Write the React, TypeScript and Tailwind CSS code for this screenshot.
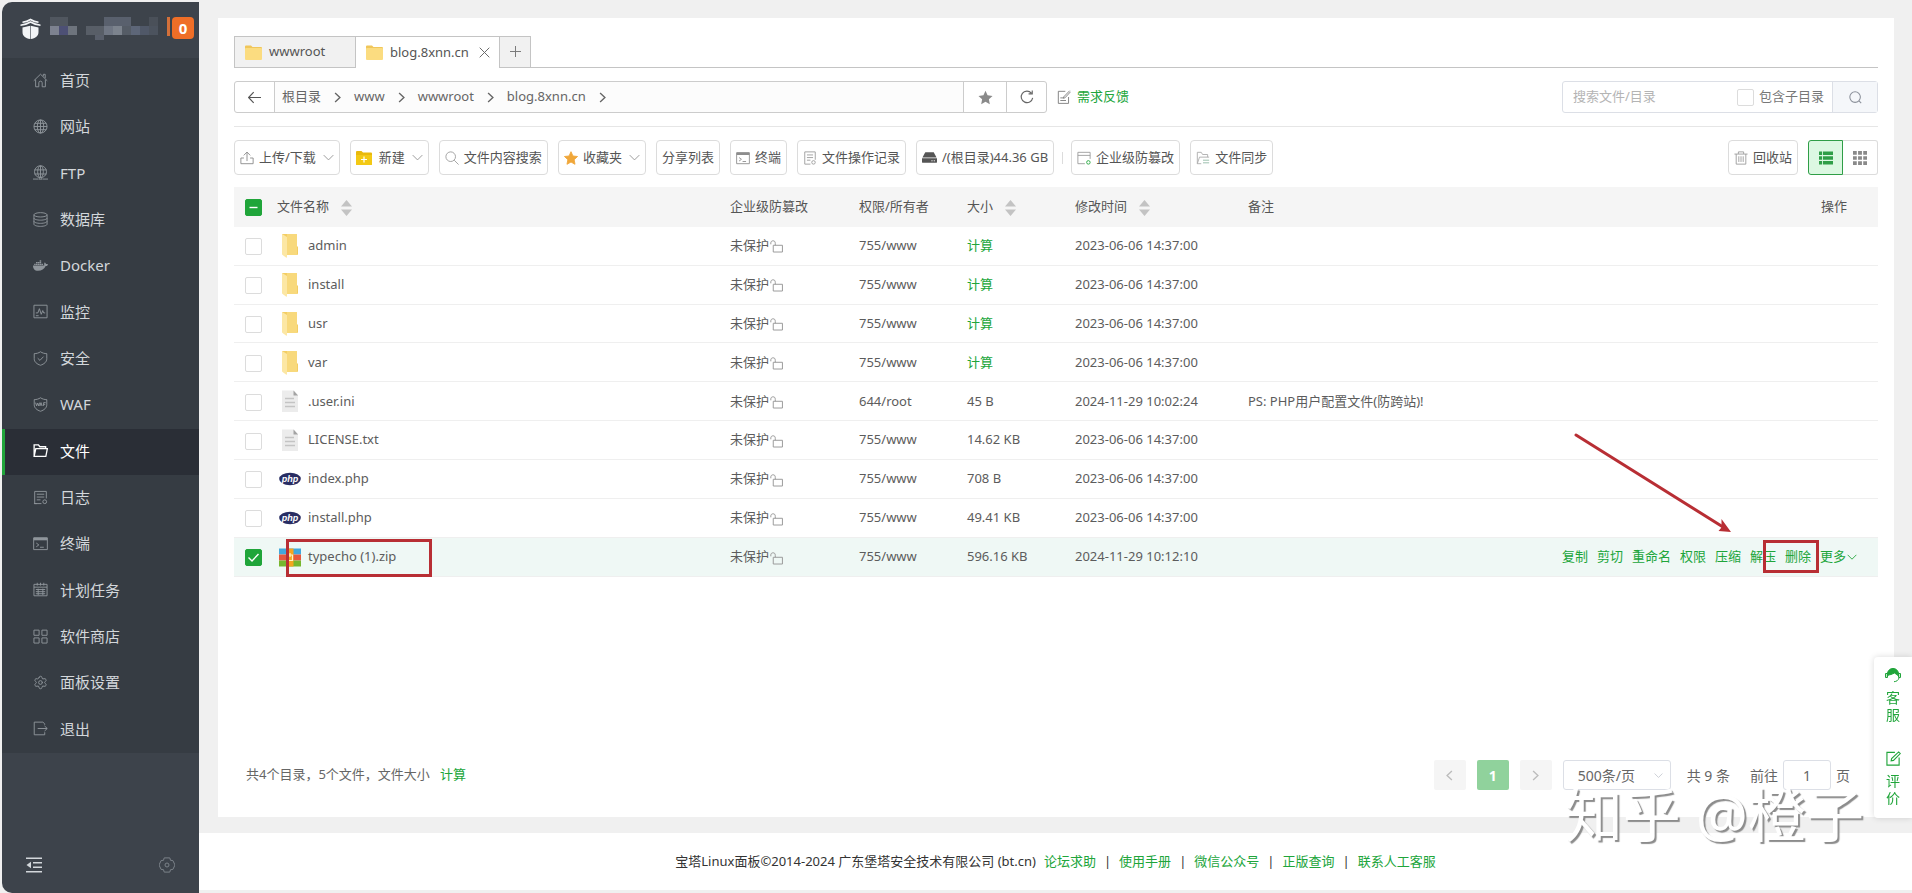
import React from 'react';
import { Settings } from 'lucide-react';
import { FaDocker } from 'react-icons/fa';

type IconProps = { className?: string; children: React.ReactNode };

const Icon = ({ className = 'size-[15px]', children }: IconProps) => (
    <svg
        className={`shrink-0 ${className}`}
        viewBox="0 0 16 16"
        fill="none"
        stroke="currentColor"
        strokeWidth="1"
        aria-hidden="true"
    >
        {children}
    </svg>
);

const ChevronDown = ({ className = 'size-[11px] text-[#999999]' }: { className?: string }) => (
    <Icon className={className}>
        <path d="M1 4.5 8 11.5l7-7" strokeWidth="1.4" />
    </Icon>
);

const ChevronRight = ({ className = 'size-[11px]' }: { className?: string }) => (
    <Icon className={className}>
        <path d="m4.5 1.5 7 6.5-7 6.5" strokeWidth="2" />
    </Icon>
);

const TerminalIcon = ({ className }: { className?: string }) => (
    <Icon className={className}>
        <path d="M.7 2h14.6v12.5H.7z" />
        <path d="M.7 1.6h14.6v3H.7z" fill="currentColor" stroke="none" />
        <path d="m3.5 7.5 2.7 2-2.7 2M7.5 12h4" />
    </Icon>
);

const menu = [
    {
        label: '首页',
        icon: (
            <Icon>
                <path d="M.8 8.3 8 1.3l7.2 7M2.8 7v7.7h3.4v-4.2a1.8 1.8 0 0 1 3.6 0v4.2h3.4V7M11 3.5V1.4h2v4" />
            </Icon>
        ),
    },
    {
        label: '网站',
        icon: (
            <Icon>
                <circle cx="8" cy="8" r="7" />
                <ellipse cx="8" cy="8" rx="3.4" ry="7" />
                <path d="M8 1v14M1 8h14M1.9 4.6h12.2M1.9 11.4h12.2" />
            </Icon>
        ),
    },
    {
        label: 'FTP',
        icon: (
            <Icon>
                <circle cx="8" cy="7.2" r="6.4" />
                <ellipse cx="8" cy="7.2" rx="3" ry="6.4" />
                <path d="M8 1v12.5M1.6 5.2h12.8M1.6 9.6h12.8M0 15h6m4 0h6" />
                <circle cx="8" cy="14.6" r="1.2" />
            </Icon>
        ),
    },
    {
        label: '数据库',
        icon: (
            <Icon>
                <ellipse cx="8" cy="3" rx="7" ry="2.3" />
                <path d="M1 3v10c0 1.3 3 2.3 7 2.3s7-1 7-2.3V3M1 6.4c0 1.3 3 2.3 7 2.3s7-1 7-2.3M1 9.8c0 1.3 3 2.3 7 2.3s7-1 7-2.3" />
            </Icon>
        ),
    },
    { label: 'Docker', icon: <FaDocker className="size-[15px]" /> },
    {
        label: '监控',
        icon: (
            <Icon>
                <path d="M1 1.3h14v13.4H1zM3 9.5h2.2L6.8 5l2 6 1.6-4 1 2.5H13M3 12.5h3" />
            </Icon>
        ),
    },
    {
        label: '安全',
        icon: (
            <Icon>
                <path d="M8 .8c2 1.4 4.3 2 6.7 2v5.4c0 3.4-2.7 5.7-6.7 7-4-1.3-6.7-3.6-6.7-7V2.8c2.4 0 4.7-.6 6.7-2z" />
                <path d="m5 7.7 2.4 2.3L11.2 6" />
            </Icon>
        ),
    },
    {
        label: 'WAF',
        icon: (
            <Icon>
                <path d="M8 .8c2 1.4 4.3 2 6.7 2v5.4c0 3.4-2.7 5.7-6.7 7-4-1.3-6.7-3.6-6.7-7V2.8c2.4 0 4.7-.6 6.7-2z" />
                <path d="m2.8 6 1 3.5L5 6.5l1.1 3L7 6m.2 3.5L8.5 6l1.3 3.5M7.8 8.5h1.5m2-2.5v3.5m0-3.5h2.2m-2.2 1.8h1.7" />
            </Icon>
        ),
    },
    {
        label: '文件',
        active: true,
        icon: (
            <Icon>
                <path d="M1.2 14.2V2h4.6l1.5 2h6.2v2M1.2 14.2 3 6h12.3l-1.6 8.2z" strokeWidth="1.4" />
            </Icon>
        ),
    },
    {
        label: '日志',
        icon: (
            <Icon>
                <path d="M9 14.5H1.8v-13h12.4V9M4 4.5h8M4 7.5h8M4 10.5h4M1 14.5h3" />
                <circle cx="12.5" cy="12.5" r="2" />
            </Icon>
        ),
    },
    { label: '终端', icon: <TerminalIcon /> },
    {
        label: '计划任务',
        icon: (
            <Icon>
                <path d="M1 2.5h14v12.2H1zM1 5.5h14M4.5.8v3M8 .8v3M11.5.8v3M3 8h10M3 10.3h10M3 12.5h10M5.5 7v7M10.5 7v7" />
            </Icon>
        ),
    },
    {
        label: '软件商店',
        icon: (
            <Icon>
                <path d="M1 1.2h5.5v5.5H1zM9.5 1.2H15v5.5H9.5zM1 9.5h5.5V15H1zM9.5 9.5H15V15H9.5z" />
            </Icon>
        ),
    },
    { label: '面板设置', icon: <Settings className="size-[15px]" strokeWidth={1.5} /> },
    {
        label: '退出',
        icon: (
            <Icon>
                <path d="M12.5 4V3l-2-1.8H1.3v13.5h11.2V12M5 8h10M12.3 5.3 15.2 8l-2.9 2.7" />
            </Icon>
        ),
    },
];

const mosaic = [
    [50, 18, 18, '#50565f'], [104, 18, 27, '#59606d'], [149, 18, 9, '#4a5059'],
    [50, 27, 9, '#7d8290'], [59, 27, 9, '#4d5075'], [68, 27, 9, '#6e747d'],
    [86, 27, 18, '#585e67'], [104, 27, 9, '#6f7683'], [113, 27, 9, '#7c838d'],
    [122, 27, 9, '#555c66'], [131, 27, 9, '#5d6678'], [140, 27, 9, '#505868'], [149, 27, 9, '#4c535e'],
    [95, 36, 9, '#595f6b'],
] as const;

const Sidebar = () => (
    <aside className="mt-0.5 ml-0.5 flex w-[197px] shrink-0 flex-col overflow-hidden rounded-l-[10px] bg-[#3d434b] text-[#d3d7db]">
        <header className="flex h-14 items-start pt-[15px] pl-[18px]">
            <svg className="mt-px size-[21px] shrink-0" viewBox="0 0 21 21" fill="#f2f4f6" aria-hidden="true">
                <path d="M2.500 9.500 10.200 7.800V21C5.500 20.300 2.500 18 2.500 14zM18.500 9.500l-7.700-1.700V21c4.700-.7 7.700-3 7.700-7z" />
                <path d="M.5 7.300c4-.3 7-1.500 10-3.300 3 1.800 6 3 10 3.300M2.500 4.300c3-.3 5.500-1.200 8-2.800 2.500 1.600 5 2.500 8 2.800" fill="none" stroke="#f2f4f6" strokeWidth="1.500" />
            </svg>
            <svg className="ml-2 h-[23px] w-[112px] shrink-0" viewBox="49 18 112 23" aria-hidden="true">
                {mosaic.map(([x, y, w, fill]) => (
                    <rect key={`${x}-${y}`} x={x} y={y} width={w} height={y === 36 ? 5 : 9} fill={fill} />
                ))}
            </svg>
            <span className="ml-1.5 h-[19px] w-[3px] shrink-0 bg-[#d3703a]" />
            <span className="ml-0.5 flex h-[22px] w-[22px] shrink-0 items-center justify-center rounded-[4px] bg-[#ef6e27] text-[15px] font-bold text-white">
                0
            </span>
        </header>
        <nav className="flex h-[695px] flex-col bg-[#363c43]">
            {menu.map((item) => (
                <a
                    key={item.label}
                    href="#"
                    className={`flex flex-1 items-center gap-3 border-l-[3px] pb-0.5 pl-7 text-[15px] ${
                        item.active ? 'border-[#20a53a] bg-[#2a2e36] text-white' : 'border-transparent'
                    }`}
                >
                    <span className={item.active ? 'text-white' : 'text-[#8f959b]'}>{item.icon}</span>
                    {item.label}
                </a>
            ))}
        </nav>
        <div className="mt-auto flex items-center justify-between pr-6 pb-5 pl-6">
            <button type="button" aria-label="收起菜单">
                <Icon className="size-4 text-[#d3d7db]">
                    <path d="M0 1.2h16M7 5.7h9M7 10.2h9M0 14.8h16" strokeWidth="1.5" />
                    <path d="M5 4.8v6.4L.5 8z" fill="currentColor" stroke="none" />
                </Icon>
            </button>
            <button type="button" aria-label="菜单设置">
                <Icon className="size-4 text-[#7b8289]">
                    <path d="M5.200.9h5.600l.7 2.400 2.400.3L16 8l-2.100 4.400-2.400.3-.7 2.400H5.200l-.7-2.400-2.400-.3L0 8l2.100-4.400 2.400-.3z" />
                    <circle cx="8" cy="8" r="2" />
                </Icon>
            </button>
        </div>
    </aside>
);

const SmallFolder = () => (
    <svg className="h-[15px] w-[17px] shrink-0" viewBox="0 0 17 15" aria-hidden="true">
        <path d="M0 1.5Q0 .5 1 .5h5L7.5 2H16q1 0 1 1v3H0z" fill="#f0c65a" />
        <rect y="3" width="17" height="12" rx="1" fill="#fbdc80" />
    </svg>
);

const Tabs = () => (
    <div className="flex text-[13px] text-[#555555]">
        <button type="button" className="flex h-8 w-[122px] items-center gap-[7px] border border-[#c4c4c4] bg-[#f1f1f1] pl-2.5">
            <SmallFolder />
            wwwroot
        </button>
        <button type="button" className="flex h-8 w-[143px] items-center gap-[7px] border-t border-[#c4c4c4] pl-2.5">
            <SmallFolder />
            blog.8xnn.cn
            <Icon className="ml-[3px] size-[11px] text-[#666666]">
                <path d="m1 1 14 14M15 1 1 15" strokeWidth="1.4" />
            </Icon>
        </button>
        <button type="button" aria-label="新建标签" className="flex h-8 w-8 items-center justify-center border border-[#c4c4c4] bg-[#f1f1f1] pb-0.5">
            <Icon className="size-[11px] text-[#777777]">
                <path d="M8 0v16M0 8h16" strokeWidth="1.4" />
            </Icon>
        </button>
        <span className="h-8 flex-1 border-b border-[#c4c4c4]" />
    </div>
);

type CheckProps = { label: string; checked?: boolean; mixed?: boolean; id?: string };

const Check = ({ label, checked = false, mixed = false, id }: CheckProps) => (
    <span className="inline-grid size-[17px] shrink-0 align-middle">
        <input
            id={id}
            type="checkbox"
            aria-label={label}
            defaultChecked={checked || mixed}
            className="col-start-1 row-start-1 size-[17px] appearance-none rounded-[2px] border border-[#dcdcdc] bg-white checked:border-[#20a53a] checked:bg-[#20a53a]"
        />
        {(checked || mixed) && (
            <svg className="pointer-events-none col-start-1 row-start-1 size-[17px]" viewBox="0 0 17 17" fill="none" stroke="white" aria-hidden="true">
                <path d={mixed ? 'M4.5 8.5h8' : 'm3.5 8.5 3.5 3.5 6.5-7'} strokeWidth="1.4" />
            </svg>
        )}
    </span>
);

const PathBar = () => (
    <div className="mt-[13px] flex h-8 items-center text-[13px]">
        <div className="flex h-8 w-[813px] min-w-0 rounded-[3px] border border-[#cccccc]">
            <button type="button" aria-label="返回" className="flex w-10 shrink-0 items-center justify-center border-r border-[#cccccc]">
                <Icon className="size-[13px] text-[#555555]">
                    <path d="M16 8H1M7 1.5.8 8 7 14.5" strokeWidth="1.4" />
                </Icon>
            </button>
            <nav className="flex min-w-0 flex-1 items-center gap-[11px] bg-[#fcfcfc] pl-[7px] text-[#666666]">
                {['根目录', 'www', 'wwwroot', 'blog.8xnn.cn'].map((part) => (
                    <React.Fragment key={part}>
                        <a href="#">{part}</a>
                        <ChevronRight className="size-[11px] text-[#666666]" />
                    </React.Fragment>
                ))}
            </nav>
            <button type="button" aria-label="收藏" className="flex w-[43px] shrink-0 items-center justify-center border-l border-[#cccccc]">
                <Icon className="size-[15px] text-[#8a8a8a]">
                    <path d="m8 .8 2.2 4.900 5.300.6-3.900 3.600 1 5.300L8 12.600l-4.600 2.600 1-5.300L.5 6.300l5.300-.6z" fill="currentColor" stroke="none" />
                </Icon>
            </button>
            <button type="button" aria-label="刷新" className="flex w-10 shrink-0 items-center justify-center border-l border-[#cccccc]">
                <Icon className="size-[14px] text-[#666666]">
                    <path d="M14.5 9A6.600 6.600 0 1 1 13 3.500M14 .5v4h-4.200" strokeWidth="1.3" />
                </Icon>
            </button>
        </div>
        <a href="#" className="ml-2.5 flex items-center gap-1.5 whitespace-nowrap text-[#20a53a]">
            <Icon className="size-[14px] text-[#777777]">
                <path d="M9.500 1.500h-8v13.800h11.700V8M3.800 9h3M3.800 12h6.500M7.500 8 14.500.8M7.500 8l-.3 1.500L9 9l6.500-7" />
            </Icon>
            需求反馈
        </a>
        <div className="ml-auto flex h-8 w-[316px] items-center rounded-[3px] border border-[#dcdfe6]">
            <input
                type="text"
                aria-label="搜索文件"
                placeholder="搜索文件/目录"
                className="w-0 flex-1 bg-transparent pl-2.5 text-[13px] outline-none placeholder:text-[#b4b4b4]"
            />
            <Check label="包含子目录" id="subdir" />
            <label htmlFor="subdir" className="pr-2 pl-[5px] whitespace-nowrap text-[#777777]">
                包含子目录
            </label>
            <button type="button" aria-label="搜索" className="flex h-full w-[45px] items-center justify-center border-l border-[#dcdfe6] bg-[#f5f7fa]">
                <Icon className="size-[13px] text-[#8b909a]">
                    <circle cx="7.5" cy="7.5" r="6.5" strokeWidth="1.3" />
                    <path d="m12.3 12.3 2.7 2.7" strokeWidth="1.3" />
                </Icon>
            </button>
        </div>
    </div>
);

type ToolProps = { label: string; icon?: React.ReactNode; more?: boolean };

const Tool = ({ label, icon, more }: ToolProps) => (
    <button
        type="button"
        className="flex h-[35px] items-center gap-[5px] rounded-[4px] border border-[#dcdcdc] px-[5px] whitespace-nowrap text-[#555555]"
    >
        {icon}
        {label}
        {more && <ChevronDown className="ml-0.5 size-[11px] text-[#999999]" />}
    </button>
);

const Toolbar = () => (
    <div className="flex items-center gap-2.5 pt-[13px] pb-3 text-[13px]">
        <Tool
            label="上传/下载"
            more
            icon={
                <Icon className="size-[14px] text-[#888888]">
                    <path d="M4.500 8H1v6.500h14V8h-3.500M8 11.500V1.300M4.300 5 8 1.200 11.700 5" />
                </Icon>
            }
        />
        <Tool
            label="新建"
            more
            icon={
                <svg className="mr-0.5 h-[14px] w-[16px] shrink-0" viewBox="0 0 16 14" aria-hidden="true">
                    <path d="M0 1q0-1 1-1h4.500L7 1.500h8q1 0 1 1V13q0 1-1 1H1q-1 0-1-1z" fill="#e9b90c" />
                    <path d="M0 4h16v9q0 1-1 1H1q-1 0-1-1z" fill="#f3c914" />
                    <path d="M8 5.500v6M5 8.500h6" stroke="white" strokeWidth="1.2" />
                </svg>
            }
        />
        <Tool
            label="文件内容搜索"
            icon={
                <Icon className="size-[14px] text-[#999999]">
                    <circle cx="6.5" cy="6.5" r="5.5" />
                    <path d="m10.500 10.500 5 5" />
                </Icon>
            }
        />
        <Tool
            label="收藏夹"
            more
            icon={
                <Icon className="size-[14px] text-[#f0a73a]">
                    <path d="m8 .8 2.200 4.900 5.300.6-3.900 3.600 1 5.300L8 12.600l-4.600 2.600 1-5.300L.5 6.300l5.300-.6z" fill="currentColor" />
                </Icon>
            }
        />
        <Tool label="分享列表" />
        <Tool label="终端" icon={<TerminalIcon className="size-[14px] text-[#8d8d8d]" />} />
        <Tool
            label="文件操作记录"
            icon={
                <Icon className="size-[14px] text-[#999999]">
                    <path d="M8.500 15H2V1h12v9M4.500 4.500h7M4.500 7.500h7M4.500 10.500h4" />
                    <circle cx="12" cy="13" r="2" />
                </Icon>
            }
        />
        <Tool
            label="/(根目录)44.36 GB"
            icon={
                <Icon className="size-[15px] text-[#555555]">
                    <path d="M3.500 2.500h9L15.500 8H.5z" fill="currentColor" stroke="none" />
                    <path d="M0 8.700h16v4q0 1-1 1H1q-1 0-1-1z" fill="currentColor" stroke="none" />
                    <path d="M10 11.500h1.300m1.200 0h1.300" stroke="white" />
                </Icon>
            }
        />
        <span className="-mx-0.5 h-3 w-px bg-[#dcdcdc]" />
        <Tool
            label="企业级防篡改"
            icon={
                <Icon className="size-[14px] text-[#999999]">
                    <path d="M9 14.500H1v-13h14V9M1 5h14" />
                    <circle cx="13" cy="13" r="2" stroke="#20a53a" />
                </Icon>
            }
        />
        <Tool
            label="文件同步"
            icon={
                <Icon className="size-[14px] text-[#aaaaaa]">
                    <path d="M6 14.500H1.500v-13H6L7.500 4h5.800v3M1.500 14.500 4 7h11" />
                    <path d="M8 10.500h7M8 13.500h7" stroke="#8fb8a4" />
                </Icon>
            }
        />
        <div className="ml-auto flex">
            <Tool
                label="回收站"
                icon={
                    <Icon className="size-[14px] text-[#999999]">
                        <path d="M.5 3.500h15M5 3.300V1h6v2.300M2.500 3.500V15h11V3.500M5.500 6v6.500M8 6v6.500M10.500 6v6.500" />
                    </Icon>
                }
            />
            <button type="button" aria-label="列表视图" className="ml-2.5 flex h-[35px] w-[35px] items-center justify-center rounded-l-[3px] border border-[#2f9e47] bg-[#dcf8e2]">
                <Icon className="size-[14px] text-[#2f9e47]">
                    <path d="M0 2.500h3.500m1 0H16M0 8h3.500m1 0H16M0 13.500h3.500m1 0H16" strokeWidth="4" />
                </Icon>
            </button>
            <button type="button" aria-label="网格视图" className="flex h-[35px] w-[35px] items-center justify-center rounded-r-[3px] border border-l-0 border-[#dcdcdc]">
                <Icon className="size-[14px] text-[#8a8a8a]">
                    <path d="M0 2.200h4.300m1.500 0h4.400m1.500 0H16M0 8h4.300m1.500 0h4.400m1.500 0H16M0 13.800h4.300m1.500 0h4.400m1.500 0H16" strokeWidth="4.2" />
                </Icon>
            </button>
        </div>
    </div>
);

const FolderIcon = () => (
    <svg className="h-[25px] w-[22px] shrink-0" viewBox="0 0 22 25" aria-hidden="true">
        <path d="M3 1h14q1 0 1 1v11l1 1v7q0 1-1 1H6z" fill="#f3cd63" />
        <path d="M8 1h9q1 0 1 1v20H8z" fill="#f8d97c" />
        <path d="M3 1 8 4v20q0 1-1 .5L3.600 22Q3 21.500 3 21z" fill="#fce7a4" />
    </svg>
);

const TextIcon = () => (
    <svg className="h-[25px] w-[22px] shrink-0" viewBox="0 0 22 25" aria-hidden="true">
        <path d="M3 1.500h12l4 4.500v17H3z" fill="#ececec" />
        <path d="M14.500 1.500 19 6.500h-4.500z" fill="#a3a3a3" />
        <path d="M6 9.500h9M6 13.500h10M6 17.500h10" stroke="#c4c4c4" strokeWidth="1.3" />
    </svg>
);

const PhpIcon = () => (
    <svg className="h-[25px] w-[22px] shrink-0" viewBox="0 0 22 25" aria-hidden="true">
        <ellipse cx="11" cy="12" rx="10.800" ry="6.2" fill="#282d63" />
        <text x="11" y="14.500" textAnchor="middle" fontSize="9" fontWeight="700" fontStyle="italic" fill="white" fontFamily="Liberation Sans, sans-serif">
            php
        </text>
    </svg>
);

const ZipIcon = () => (
    <svg className="h-[25px] w-[22px] shrink-0" viewBox="0 0 22 25" aria-hidden="true">
        <path d="M0 3.500h22v6H0z" fill="#42a8dc" />
        <path d="M0 9.500h22v6H0z" fill="#e5583f" />
        <path d="M0 15.500h22v6H0z" fill="#76b72e" />
        <path d="M7.500 3.500h7v18h-7z" fill="#f5a51f" />
        <path d="M9 10h4.500v5.500H9zM11 8v4" fill="none" stroke="#fff2c4" strokeWidth="1.2" />
    </svg>
);

const icons = { folder: <FolderIcon />, text: <TextIcon />, php: <PhpIcon />, zip: <ZipIcon /> };

type FileRow = {
    name: string;
    type: keyof typeof icons;
    owner: string;
    size?: string;
    time: string;
    note?: string;
    selected?: boolean;
};

const files: FileRow[] = [
    { name: 'admin', type: 'folder', owner: '755/www', time: '2023-06-06 14:37:00' },
    { name: 'install', type: 'folder', owner: '755/www', time: '2023-06-06 14:37:00' },
    { name: 'usr', type: 'folder', owner: '755/www', time: '2023-06-06 14:37:00' },
    { name: 'var', type: 'folder', owner: '755/www', time: '2023-06-06 14:37:00' },
    { name: '.user.ini', type: 'text', owner: '644/root', size: '45 B', time: '2024-11-29 10:02:24', note: 'PS: PHP用户配置文件(防跨站)!' },
    { name: 'LICENSE.txt', type: 'text', owner: '755/www', size: '14.62 KB', time: '2023-06-06 14:37:00' },
    { name: 'index.php', type: 'php', owner: '755/www', size: '708 B', time: '2023-06-06 14:37:00' },
    { name: 'install.php', type: 'php', owner: '755/www', size: '49.41 KB', time: '2023-06-06 14:37:00' },
    { name: 'typecho (1).zip', type: 'zip', owner: '755/www', size: '596.16 KB', time: '2024-11-29 10:12:10', selected: true },
];

const Sort = () => (
    <button type="button" aria-label="排序" className="ml-3 inline-block align-middle">
        <svg className="h-4 w-[11px]" viewBox="0 0 11 16" fill="#c3c3c3" aria-hidden="true">
            <path d="M5.500 0 11 6.500H0zM5.500 16 11 9.500H0z" />
        </svg>
    </button>
);

const RowActions = () => (
    <div className="relative flex items-center justify-end gap-[9px] whitespace-nowrap text-[#20a53a]">
        {['复制', '剪切', '重命名', '权限', '压缩', '解压', '删除'].map((action) => (
            <button key={action} type="button">
                {action}
            </button>
        ))}
        <button type="button" className="flex items-center gap-px">
            更多
            <ChevronDown className="size-[10px] text-[#20a53a]" />
        </button>
        <span className="pointer-events-none absolute -top-[7px] right-[38px] h-[33px] w-14 border-3 border-[#b82e34]" />
    </div>
);

const FileTable = () => (
    <table className="h-[390px] w-full table-fixed text-left text-[13px] text-[#5c5c5c]">
        <thead>
            <tr className="h-10 bg-[#f5f5f5] text-[#555555] [&>th]:font-normal">
                <th className="w-8 pl-[11px]">
                    <Check label="全选" mixed />
                </th>
                <th className="w-[453px] pl-[11px]">
                    文件名称
                    <Sort />
                </th>
                <th className="w-[129px] pl-[11px]">企业级防篡改</th>
                <th className="w-[108px] pl-[11px]">权限/所有者</th>
                <th className="w-[108px] pl-[11px]">
                    大小
                    <Sort />
                </th>
                <th className="w-[173px] pl-[11px]">
                    修改时间
                    <Sort />
                </th>
                <th className="pl-[11px]">备注</th>
                <th className="w-[340px] pr-[31px] text-right">操作</th>
            </tr>
        </thead>
        <tbody>
            {files.map((file) => (
                <tr key={file.name} className={`border-b border-[#efefef] ${file.selected ? 'bg-[#eff8f5]' : ''}`}>
                    <td className="pl-[11px]">
                        <Check label={file.name} checked={file.selected} />
                    </td>
                    <td className="pl-[13px]">
                        <div className="relative flex items-center gap-[7px]">
                            {icons[file.type]}
                            <a href="#">{file.name}</a>
                            {file.selected && (
                                <span className="pointer-events-none absolute -top-1.5 left-[7px] h-[38px] w-[146px] border-3 border-[#b82e34]" />
                            )}
                        </div>
                    </td>
                    <td className="pl-[11px]">
                        <div className="flex items-center gap-px">
                            未保护
                            <Icon className="mt-0.5 size-[13px] text-[#999999]">
                                <path d="M4 6.500h11.300v8.300H4zM6.500 6.500V4.300C6.500 1.500 5.200 1 3.800 1S1 1.800 1 3.500v1.800" strokeWidth="1.2" />
                            </Icon>
                        </div>
                    </td>
                    <td className="pl-[11px]">{file.owner}</td>
                    <td className="pl-[11px]">
                        {file.size ?? (
                            <button type="button" className="text-[#20a53a]">
                                计算
                            </button>
                        )}
                    </td>
                    <td className="pl-[11px] whitespace-nowrap">{file.time}</td>
                    <td className="pl-[11px] whitespace-nowrap">{file.note}</td>
                    <td className="pr-[21px]">{file.selected && <RowActions />}</td>
                </tr>
            ))}
        </tbody>
    </table>
);

const Pager = () => (
    <div className="mt-auto flex items-center pr-7 pl-3 text-[13px] text-[#666666]">
        <span>共4个目录，5个文件，文件大小</span>
        <button type="button" className="ml-2.5 text-[#20a53a]">
            计算
        </button>
        <div className="ml-auto flex items-center text-[14px]">
            <button type="button" aria-label="上一页" className="flex h-[30px] w-8 items-center justify-center rounded-[2px] bg-[#f5f5f5]">
                <ChevronRight className="size-[11px] rotate-180 text-[#bcbcbc]" />
            </button>
            <button type="button" className="ml-[11px] h-[30px] w-8 rounded-[2px] bg-[#90d29c] font-bold text-white">
                1
            </button>
            <button type="button" aria-label="下一页" className="ml-[11px] flex h-[30px] w-8 items-center justify-center rounded-[2px] bg-[#f5f5f5]">
                <ChevronRight className="size-[11px] text-[#bcbcbc]" />
            </button>
            <div className="ml-[11px] grid w-[108px] items-center">
                <select aria-label="每页条数" className="col-start-1 row-start-1 h-[30px] appearance-none rounded-[3px] border border-[#dcdfe6] pl-3.5 outline-none">
                    <option>500条/页</option>
                </select>
                <ChevronDown className="pointer-events-none col-start-1 row-start-1 mr-2 size-[9px] justify-self-end text-[#c0c4cc]" />
            </div>
            <span className="ml-4">共 9 条</span>
            <label htmlFor="page" className="ml-5">
                前往
            </label>
            <input id="page" type="text" defaultValue="1" className="mx-[5px] h-[30px] w-12 rounded-[3px] border border-[#dcdfe6] text-center outline-none" />
            页
        </div>
    </div>
);

const Arrow = () => (
    <svg className="pointer-events-none absolute top-[414px] right-[161px] h-[104px] w-[160px]" viewBox="0 0 160 104" aria-hidden="true">
        <path d="m3 3 147 92" stroke="#b82e34" strokeWidth="3" strokeLinecap="round" />
        <path d="m158 100-12.500-1 3-3.500v-8.500z" fill="#b82e34" />
    </svg>
);

const links = ['论坛求助', '使用手册', '微信公众号', '正版查询', '联系人工客服'];

const Footer = () => (
    <footer className="mb-[3px] flex h-[57px] items-center justify-center bg-white text-[13px] text-[#333333]">
        <span>宝塔Linux面板©2014-2024 广东堡塔安全技术有限公司 (bt.cn)</span>
        {links.map((link, i) => (
            <React.Fragment key={link}>
                {i > 0 && <span className="ml-2">|</span>}
                <a href="#" className="ml-2 text-[#20a53a]">
                    {link}
                </a>
            </React.Fragment>
        ))}
    </footer>
);

const SideWidget = () => (
    <div className="fixed right-0 bottom-[75px] flex w-[38px] flex-col items-center rounded-l-[4px] bg-white pt-2.5 pb-3 text-[14px] leading-[17px] text-[#20a53a] shadow-[0_0_6px_rgba(0,0,0,0.15)]">
        <a href="#" className="flex w-[15px] flex-col items-center gap-1.5">
            <Icon className="size-4">
                <path d="M2.200 9.500C2 4 4.500 1.500 8 1.500S14 4 13.800 9.500L12.500 8 9.500 6 6 7.500 3.500 8z" fill="currentColor" />
                <path d="M.5 6.500v4h2v-4zM13.500 6.500v4h2v-4zM14 11c-.8 2.500-2.500 3.500-5 3.700" />
            </Icon>
            <span className="w-[14px]">客服</span>
        </a>
        <a href="#" className="mt-7 flex w-[15px] flex-col items-center gap-1.5">
            <Icon className="size-[15px]">
                <path d="M9.500 1.500H1v13.500h13V7M5.500 10.500 6 8l7.500-7 1.700 1.700L8 10z" strokeWidth="1.2" />
            </Icon>
            <span className="w-[14px]">评价</span>
        </a>
    </div>
);

const App = () => (
    <div className="flex min-h-screen bg-[#f0f0f0] font-['Noto_Sans','Noto_Sans_CJK_SC',sans-serif]">
        <Sidebar />
        <main className="flex min-w-0 flex-1 flex-col">
            <section className="relative mt-[18px] mr-[18px] mb-4 ml-[19px] flex flex-1 flex-col bg-white px-4 pt-[18px] pb-[27px]">
                <Tabs />
                <PathBar />
                <hr className="mt-[13px] border-[#e6e6e6]" />
                <Toolbar />
                <FileTable />
                <Pager />
                <Arrow />
                <p className="pointer-events-none absolute right-[30px] -bottom-[23px] text-[58px] leading-[50px] whitespace-nowrap text-white [text-shadow:2px_2px_1px_#8c8c8c]">
                    知乎 @橙子
                </p>
            </section>
            <Footer />
        </main>
        <SideWidget />
    </div>
);

export default App;
